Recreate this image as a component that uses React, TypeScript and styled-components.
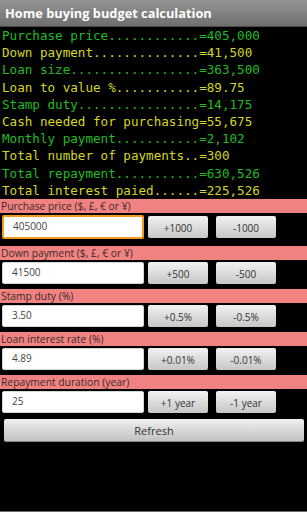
import React from 'react';
import styled, { createGlobalStyle } from 'styled-components';

const GlobalStyle = createGlobalStyle`
    html, body {
        margin: 0;
        padding: 0;
        background: #000;
    }
    * {
        box-sizing: border-box;
    }
`

type Line = { label: string; value: string; color: 'green' | 'yellow' }

const lines: Line[] = [
    { label: 'Purchase price', value: '405,000', color: 'green' },
    { label: 'Down payment', value: '41,500', color: 'yellow' },
    { label: 'Loan size', value: '363,500', color: 'green' },
    { label: 'Loan to value %', value: '89.75', color: 'yellow' },
    { label: 'Stamp duty', value: '14,175', color: 'green' },
    { label: 'Cash needed for purchasing', value: '55,675', color: 'yellow' },
    { label: 'Monthly payment', value: '2,102', color: 'green' },
    { label: 'Total number of payments', value: '300', color: 'yellow' },
    { label: 'Total repayment', value: '630,526', color: 'green' },
    { label: 'Total interest paied', value: '225,526', color: 'yellow' },
]

type Field = { label: string; value: string; plus: string; minus: string; focused?: boolean }

const fields: Field[] = [
    { label: 'Purchase price ($, £, € or ¥)', value: '405000', plus: '+1000', minus: '-1000', focused: true },
    { label: 'Down payment ($, £, € or ¥)', value: '41500', plus: '+500', minus: '-500' },
    { label: 'Stamp duty (%)', value: '3.50', plus: '+0.5%', minus: '-0.5%' },
    { label: 'Loan interest rate (%)', value: '4.89', plus: '+0.01%', minus: '-0.01%' },
    { label: 'Repayment duration (year)', value: '25', plus: '+1 year', minus: '-1 year' },
]

export default function App() {
    return (
        <Screen>
            <GlobalStyle />
            <TitleBar>Home buying budget calculation</TitleBar>
            <Summary>
                {lines.map((l) => (
                    <SummaryLine key={l.label} $color={l.color}>
                        {l.label.padEnd(26, '.')}={l.value}
                    </SummaryLine>
                ))}
            </Summary>
            {fields.map((f) => (
                <FieldBlock key={f.label} $focused={f.focused}>
                    <FieldLabel>{f.label}</FieldLabel>
                    <FieldRow>
                        <ValueInput $focused={f.focused}>{f.value}</ValueInput>
                        <StepButton>{f.plus}</StepButton>
                        <StepButton>{f.minus}</StepButton>
                    </FieldRow>
                </FieldBlock>
            ))}
            <RefreshButton>Refresh</RefreshButton>
        </Screen>
    )
}

const Screen = styled.div`
    width: 307px;
    height: 512px;
    background: #000;
    border-bottom: 1px solid #6a6a6a;
    display: flex;
    flex-direction: column;
`

const TitleBar = styled.div`
    height: 27px;
    padding: 0 5px;
    display: flex;
    align-items: center;
    background: linear-gradient(#959595, #6e6e6e);
    border-bottom: 1px solid #4a4a4a;
    color: #fff;
    font-family: 'Open Sans', 'DejaVu Sans', sans-serif;
    font-weight: 700;
    font-size: 12.8px;
    white-space: nowrap;
`

const Summary = styled.div`
    padding: 0 0 0 2px;
    height: 172px;
`

const SummaryLine = styled.div<{ $color: 'green' | 'yellow' }>`
    font-family: 'DejaVu Sans Mono', monospace;
    font-size: 12.6px;
    line-height: 17.2px;
    height: 17.2px;
    white-space: pre;
    color: ${(p) => (p.$color === 'green' ? '#20bc22' : '#d6d622')};
`

const FieldBlock = styled.div<{ $focused?: boolean }>`
    display: flex;
    flex-direction: column;
    gap: 2px;
    margin-bottom: ${(p) => (p.$focused ? 7 : 5)}px;
`

const FieldLabel = styled.div`
    height: 14px;
    padding-left: 1px;
    background: #f08282;
    color: #3a2a2a;
    font-family: 'Open Sans', 'DejaVu Sans', sans-serif;
    font-size: 10.3px;
    line-height: 14px;
    white-space: nowrap;
`

const FieldRow = styled.div`
    display: flex;
    align-items: center;
    padding-left: 2px;
    gap: 4px;
`

const ValueInput = styled.div<{ $focused?: boolean }>`
    width: 142px;
    height: ${(p) => (p.$focused ? 24 : 22)}px;
    padding: 0 0 2px 9px;
    display: flex;
    align-items: center;
    background: #fff;
    border-radius: 2px;
    border: ${(p) => (p.$focused ? '2px solid #f39a1c' : '1px solid #d8d8d8')};
    color: #444;
    font-family: 'Open Sans', 'DejaVu Sans', sans-serif;
    font-size: 10px;
`

const StepButton = styled.div`
    width: 60px;
    height: 22px;
    padding-top: 2px;
    display: flex;
    align-items: center;
    justify-content: center;
    background: linear-gradient(#f2f2f2, #c6c6c6);
    border-radius: 2px;
    color: #333;
    font-family: 'Open Sans', 'DejaVu Sans', sans-serif;
    font-size: 10px;

    & + & {
        margin-left: 4px;
    }
`

const RefreshButton = styled.div`
    margin: 1px 3px 0 4px;
    height: 23px;
    display: flex;
    align-items: center;
    justify-content: center;
    background: linear-gradient(#f0f0f0, #c2c2c2);
    border-radius: 2px;
    border-bottom: 1px solid #8a8a8a;
    color: #333;
    font-family: 'Open Sans', 'DejaVu Sans', sans-serif;
    font-size: 11px;
`
